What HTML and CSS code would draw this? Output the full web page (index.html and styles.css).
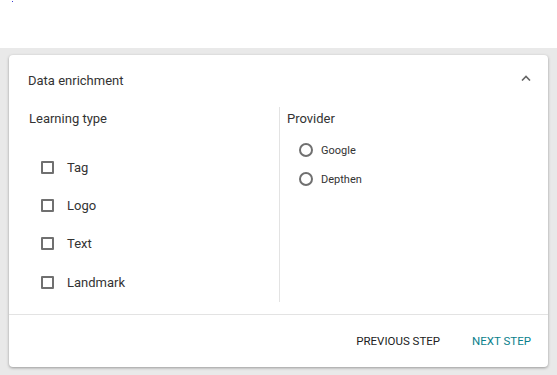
FILE: index.html
```html
<!DOCTYPE html>
<html lang="en">
<head>
    <meta charset="UTF-8">
    <meta name="viewport" content="width=device-width, initial-scale=1.0">
    <title>Data enrichment</title>
    <link rel="stylesheet" href="styles.css">
</head>
<body>
    <div class="topbar"><span class="dot"></span></div>
    <div class="page">
        <div class="card">
            <div class="cardHeader">
                <span class="cardTitle">Data enrichment</span>
                <svg class="chevron" width="10" height="6" viewBox="0 0 10 6">
                    <path d="M1 5.5 L5 1.5 L9 5.5" fill="none" stroke="#666" stroke-width="1.6"/>
                </svg>
            </div>
            <div class="cardBody">
                <div class="col leftCol">
                    <div class="colTitle">Learning type</div>
                    <div class="checkList">
                        <label class="checkItem"><span class="box"></span>Tag</label>
                        <label class="checkItem"><span class="box"></span>Logo</label>
                        <label class="checkItem"><span class="box"></span>Text</label>
                        <label class="checkItem"><span class="box"></span>Landmark</label>
                    </div>
                </div>
                <div class="col rightCol">
                    <div class="colTitle">Provider</div>
                    <div class="radioList">
                        <label class="radioItem"><span class="circle"></span>Google</label>
                        <label class="radioItem"><span class="circle"></span>Depthen</label>
                    </div>
                </div>
            </div>
            <div class="cardFooter">
                <button class="btn">Previous step</button>
                <button class="btn nextBtn">Next step</button>
            </div>
        </div>
    </div>
</body>
</html>
```

FILE: styles.css
```css
body {
    margin: 0;
    font-family: Roboto, "Liberation Sans", sans-serif;
    color: #333;
    background: #e9e9e9;
}
.topbar {
    height: 48px;
    background: #fff;
    position: relative;
}
.dot {
    position: absolute;
    left: 12px;
    top: 1px;
    width: 1px;
    height: 1px;
    background: #3b3bd6;
}
.page {
    padding: 7px 9px 8px 9px;
}
.card {
    background: #fff;
    border-radius: 4px;
    box-shadow: 0 1px 3px rgba(0, 0, 0, 0.35);
}
.cardHeader {
    height: 52px;
    display: flex;
    align-items: center;
    justify-content: space-between;
    padding: 0 17px 0 19px;
}
.cardTitle {
    font-size: 13px;
    margin-top: -1px;
}
.chevron {
    margin-top: -7px;
}
.cardBody {
    display: flex;
    padding-bottom: 12px;
}
.col {
    padding-bottom: 8px;
}
.leftCol {
    width: 250px;
    padding-left: 20px;
    border-right: 1px solid #e3e3e3;
}
.rightCol {
    padding-left: 7px;
}
.colTitle {
    font-size: 13px;
    line-height: 24px;
}
.checkList {
    display: flex;
    flex-direction: column;
    gap: 14px;
    padding: 24px 0 0 12px;
}
.checkItem {
    display: flex;
    align-items: center;
    gap: 13px;
    font-size: 13px;
    height: 24px;
}
.checkItem:last-child {
    margin-top: 1px;
}
.box {
    width: 9px;
    height: 9px;
    border: 2px solid #707070;
    border-radius: 1px;
}
.radioList {
    display: flex;
    flex-direction: column;
    gap: 7px;
    padding: 8px 0 0 12px;
}
.radioItem {
    display: flex;
    align-items: center;
    gap: 8px;
    font-size: 11px;
    height: 22px;
}
.circle {
    width: 10px;
    height: 10px;
    border: 2px solid #707070;
    border-radius: 50%;
}
.cardFooter {
    border-top: 1px solid #e3e3e3;
    height: 52px;
    display: flex;
    align-items: center;
    justify-content: flex-end;
    gap: 32px;
    padding-right: 17px;
}
.btn {
    border: none;
    background: none;
    padding: 0;
    font-family: Roboto, "Liberation Sans", sans-serif;
    font-size: 11.5px;
    font-weight: 400;
    text-transform: uppercase;
    color: #222;
    cursor: pointer;
}
.nextBtn {
    color: #0a7f8c;
}
```
